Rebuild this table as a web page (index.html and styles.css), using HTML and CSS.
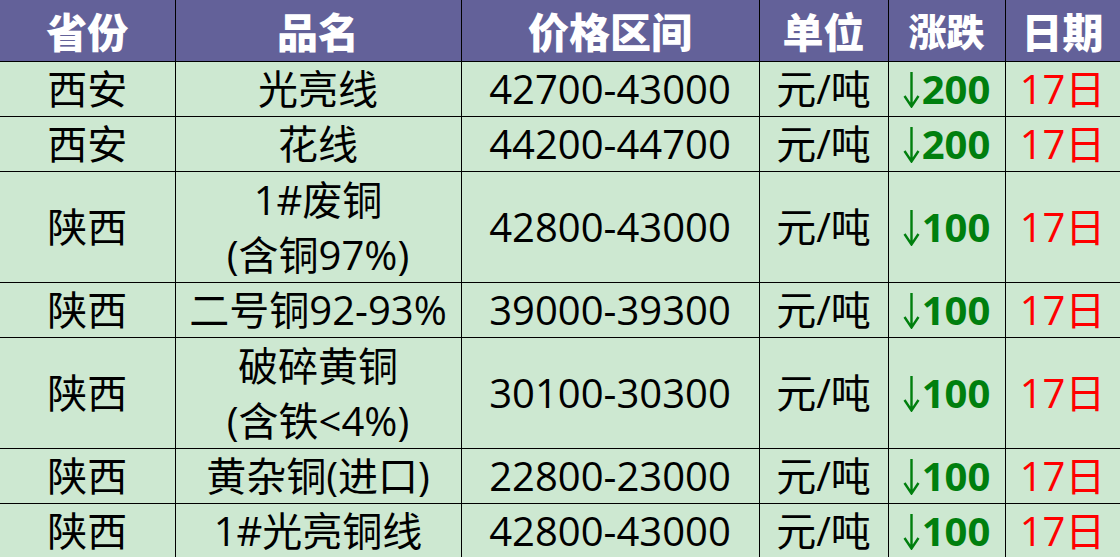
FILE: index.html
```html
<!DOCTYPE html>
<html lang="zh-CN">
<head>
<meta charset="utf-8">
<title>价格表</title>
<link rel="stylesheet" href="styles.css">
</head>
<body>
<table class="price-table">
  <colgroup>
    <col class="c-prov">
    <col class="c-name">
    <col class="c-price">
    <col class="c-unit">
    <col class="c-chg">
    <col class="c-date">
  </colgroup>
  <thead>
    <tr class="head">
      <th>省份</th><th>品名</th><th>价格区间</th><th>单位</th><th class="narrow">涨跌</th><th>日期</th>
    </tr>
  </thead>
  <tbody>
    <tr class="single">
      <td>西安</td><td>光亮线</td><td>42700-43000</td><td>元/吨</td><td class="chg"><svg class="arrow" viewBox="0 0 17 36" aria-label="↓"><path d="M8.5 0V34M1.5 24L8.5 34.5L15.5 24"/></svg>200</td><td class="date">17日</td>
    </tr>
    <tr class="single">
      <td>西安</td><td>花线</td><td>44200-44700</td><td>元/吨</td><td class="chg"><svg class="arrow" viewBox="0 0 17 36" aria-label="↓"><path d="M8.5 0V34M1.5 24L8.5 34.5L15.5 24"/></svg>200</td><td class="date">17日</td>
    </tr>
    <tr class="double">
      <td>陕西</td><td><span class="ln">1#废铜</span><span class="ln">(含铜97%)</span></td><td>42800-43000</td><td>元/吨</td><td class="chg"><svg class="arrow" viewBox="0 0 17 36" aria-label="↓"><path d="M8.5 0V34M1.5 24L8.5 34.5L15.5 24"/></svg>100</td><td class="date">17日</td>
    </tr>
    <tr class="single">
      <td>陕西</td><td>二号铜92-93%</td><td>39000-39300</td><td>元/吨</td><td class="chg"><svg class="arrow" viewBox="0 0 17 36" aria-label="↓"><path d="M8.5 0V34M1.5 24L8.5 34.5L15.5 24"/></svg>100</td><td class="date">17日</td>
    </tr>
    <tr class="double">
      <td>陕西</td><td><span class="ln">破碎黄铜</span><span class="ln">(含铁&lt;4%)</span></td><td>30100-30300</td><td>元/吨</td><td class="chg"><svg class="arrow" viewBox="0 0 17 36" aria-label="↓"><path d="M8.5 0V34M1.5 24L8.5 34.5L15.5 24"/></svg>100</td><td class="date">17日</td>
    </tr>
    <tr class="single">
      <td>陕西</td><td>黄杂铜(进口)</td><td>22800-23000</td><td>元/吨</td><td class="chg"><svg class="arrow" viewBox="0 0 17 36" aria-label="↓"><path d="M8.5 0V34M1.5 24L8.5 34.5L15.5 24"/></svg>100</td><td class="date">17日</td>
    </tr>
    <tr class="single">
      <td>陕西</td><td>1#光亮铜线</td><td>42800-43000</td><td>元/吨</td><td class="chg"><svg class="arrow" viewBox="0 0 17 36" aria-label="↓"><path d="M8.5 0V34M1.5 24L8.5 34.5L15.5 24"/></svg>100</td><td class="date">17日</td>
    </tr>
  </tbody>
</table>
</body>
</html>
```

FILE: styles.css
```css
html, body {
  margin: 0;
  padding: 0;
  background: #cde8d1;
}

.price-table {
  width: 1120px;
  table-layout: fixed;
  border-collapse: collapse;
  font-family: "Open Sans", "Noto Sans CJK SC", sans-serif;
  font-size: 40px;
  color: #000;
}

.c-prov { width: 175px; }
.c-name { width: 286px; }
.c-price { width: 298px; }
.c-unit { width: 129px; }
.c-chg { width: 117px; }
.c-date { width: 115px; }

.price-table th,
.price-table td {
  border: 1px solid #000;
  padding: 0;
  text-align: center;
  vertical-align: middle;
  white-space: nowrap;
  overflow: hidden;
}

.price-table th:first-child,
.price-table td:first-child {
  border-left: none;
}

.price-table thead th {
  border-top: none;
}

.head {
  height: 61px;
  background: #636199;
}

.head th {
  color: #ffffff;
  font-family: "Noto Sans CJK SC", sans-serif;
  font-weight: 900;
  font-size: 41px;
  line-height: 44px;
}

.head th.narrow {
  font-size: 38px;
}

tbody tr {
  background: #cde8d1;
}

tbody td {
  line-height: 40px;
}

.single { height: 55px; }
.double { height: 110px; }

.ln {
  display: block;
  height: 55px;
  line-height: 55px;
  overflow: visible;
}

.chg {
  color: #007f0e;
  font-weight: 700;
}

.arrow {
  width: 17px;
  height: 36px;
  vertical-align: -4px;
  margin-right: 2px;
  fill: none;
  stroke: #007f0e;
  stroke-width: 2.4;
  stroke-linecap: butt;
  stroke-linejoin: miter;
}

.date {
  color: #ff0000;
}
```
